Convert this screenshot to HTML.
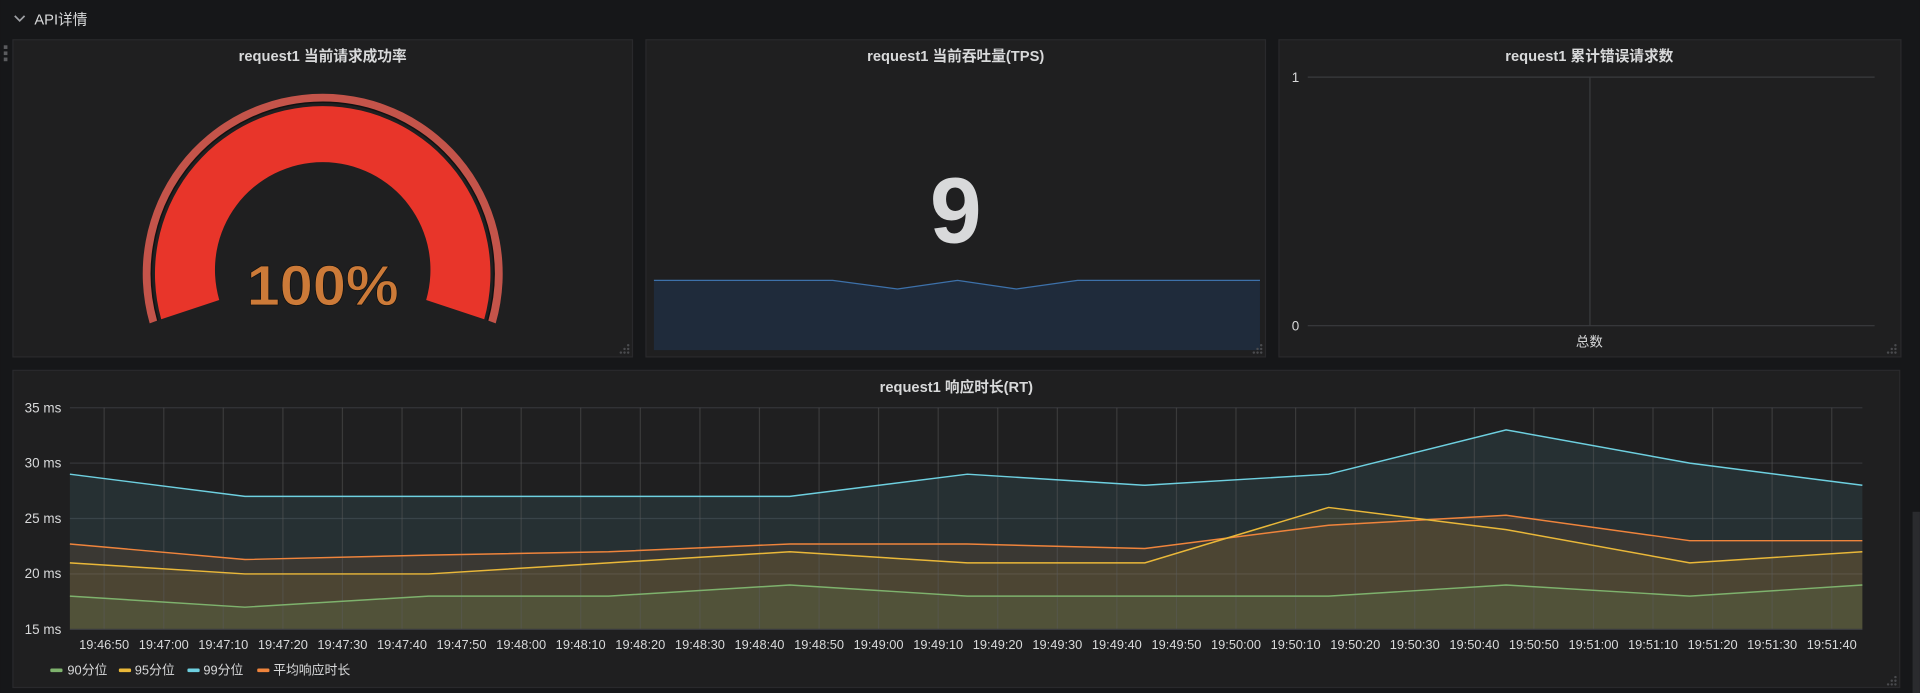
<!DOCTYPE html>
<html><head><meta charset="utf-8"><style>
html,body{margin:0;padding:0;background:#161719;width:1920px;height:693px;overflow:hidden}
svg{display:block}
text{font-family:"Liberation Sans","Noto Sans CJK SC",sans-serif}
</style></head><body>
<svg width="1920" height="693" viewBox="0 0 1568 566" xmlns="http://www.w3.org/2000/svg">
<rect width="1568" height="566" fill="#161719"/>
<path d="M12 13 l4 4 l4 -4" stroke="#9fa1a5" stroke-width="1.4" fill="none"/>
<text x="28" y="20" font-size="12" fill="#d8d9da">API详情</text>
<g fill="#5a5b5e"><rect x="3" y="37" width="3" height="3"/><rect x="3" y="42" width="3" height="3"/><rect x="3" y="47" width="3" height="3"/></g>

<!-- panel 1 -->
<rect x="10.5" y="32.5" width="506" height="259" fill="#1f1f20" stroke="#29292c"/>
<text x="263.5" y="50" font-size="12" font-weight="bold" fill="#d8d9da" text-anchor="middle">request1 当前请求成功率</text>
<path d="M122.2 264.1 A147 147 0 1 1 404.8 264.1 L398.2 261.7 A140 140 0 1 0 128.8 261.7 Z" fill="#c4544a"/>
<path d="M128.8 261.7 A140 140 0 1 1 398.2 261.7" fill="none" stroke="#111" stroke-width="1.2"/>
<path d="M131.6 260.7 A137 137 0 1 1 395.4 260.7 L348 245 A88 88 0 1 0 179 245 Z" fill="#e8352a"/>
<text x="263.5" y="249" font-size="46" font-weight="bold" fill="#cc7a38" stroke="#111" stroke-width="0.6" text-anchor="middle" textLength="124" lengthAdjust="spacingAndGlyphs">100%</text>
<g fill="#4a4b4e"><circle cx="513" cy="282" r="1"/><circle cx="513" cy="285" r="1"/><circle cx="510" cy="285" r="1"/><circle cx="513" cy="288" r="1"/><circle cx="510" cy="288" r="1"/><circle cx="507" cy="288" r="1"/></g>

<!-- panel 2 -->
<rect x="527.5" y="32.5" width="506" height="259" fill="#1f1f20" stroke="#29292c"/>
<text x="780.5" y="50" font-size="12" font-weight="bold" fill="#d8d9da" text-anchor="middle">request1 当前吞吐量(TPS)</text>
<text x="780.5" y="198" font-size="76" font-weight="bold" fill="#d8d9da" text-anchor="middle">9</text>
<path d="M534 229 L680 229 L733 236 L782 229 L830 236 L880 229 L1029 229 L1029 286 L534 286 Z" fill="#1f2b3b"/>
<path d="M534 229 L680 229 L733 236 L782 229 L830 236 L880 229 L1029 229" fill="none" stroke="#3d71aa" stroke-width="1"/>
<g fill="#4a4b4e"><circle cx="1030" cy="282" r="1"/><circle cx="1030" cy="285" r="1"/><circle cx="1027" cy="285" r="1"/><circle cx="1030" cy="288" r="1"/><circle cx="1027" cy="288" r="1"/><circle cx="1024" cy="288" r="1"/></g>

<!-- panel 3 -->
<rect x="1044.5" y="32.5" width="508" height="259" fill="#1f1f20" stroke="#29292c"/>
<text x="1298" y="50" font-size="12" font-weight="bold" fill="#d8d9da" text-anchor="middle">request1 累计错误请求数</text>
<line x1="1068" y1="63" x2="1531" y2="63" stroke="#3a3b3e"/>
<line x1="1068" y1="266" x2="1531" y2="266" stroke="#3a3b3e"/>
<line x1="1298.5" y1="63" x2="1298.5" y2="266" stroke="#3a3b3e"/>
<text x="1058" y="67" font-size="11" fill="#d8d9da" text-anchor="middle">1</text>
<text x="1058" y="270" font-size="11" fill="#d8d9da" text-anchor="middle">0</text>
<text x="1298" y="283" font-size="11" fill="#d8d9da" text-anchor="middle">总数</text>
<g fill="#4a4b4e"><circle cx="1548" cy="282" r="1"/><circle cx="1548" cy="285" r="1"/><circle cx="1545" cy="285" r="1"/><circle cx="1548" cy="288" r="1"/><circle cx="1545" cy="288" r="1"/><circle cx="1542" cy="288" r="1"/></g>

<!-- bottom panel -->
<rect x="10.5" y="302.5" width="1541" height="259" fill="#1f1f20" stroke="#29292c"/>
<rect x="1562" y="418" width="6" height="148" fill="#2a2b2e"/>
<text x="781" y="320" font-size="12" font-weight="bold" fill="#d8d9da" text-anchor="middle">request1 响应时长(RT)</text>
<g stroke="#343538" stroke-width="1">
<line x1="57" y1="333" x2="1521" y2="333"/><line x1="57" y1="378.25" x2="1521" y2="378.25"/><line x1="57" y1="423.5" x2="1521" y2="423.5"/><line x1="57" y1="468.75" x2="1521" y2="468.75"/>
</g>
<g font-size="11" fill="#d8d9da" text-anchor="end">
<text x="50" y="337">35 ms</text><text x="50" y="382">30 ms</text><text x="50" y="427">25 ms</text><text x="50" y="472">20 ms</text><text x="50" y="518">15 ms</text>
</g>
<path d="M57 387.3 L200 405.4 L350 405.4 L497 405.4 L645 405.4 L790 387.3 L935 396.35 L1085 387.3 L1230 351.1 L1380 378.25 L1521 396.35 L1521 514 L57 514Z" fill="#6ed0e0" fill-opacity="0.1"/>
<path d="M57 444.3 L200 457 L350 453.4 L497 450.65 L645 444.3 L790 444.3 L935 448 L1085 429 L1230 420.8 L1380 441.6 L1521 441.6 L1521 514 L57 514Z" fill="#ef843c" fill-opacity="0.1"/>
<path d="M57 459.7 L200 468.75 L350 468.75 L497 459.7 L645 450.65 L790 459.7 L935 459.7 L1085 414.45 L1230 432.55 L1380 459.7 L1521 450.65 L1521 514 L57 514Z" fill="#eab839" fill-opacity="0.1"/>
<path d="M57 486.85 L200 495.9 L350 486.85 L497 486.85 L645 477.8 L790 486.85 L935 486.85 L1085 486.85 L1230 477.8 L1380 486.85 L1521 477.8 L1521 514 L57 514Z" fill="#7eb26d" fill-opacity="0.12"/>
<g stroke="#5a5b5c" stroke-opacity="0.45">
<line x1="85" y1="333" x2="85" y2="514"/><line x1="133.7" y1="333" x2="133.7" y2="514"/><line x1="182.3" y1="333" x2="182.3" y2="514"/><line x1="231" y1="333" x2="231" y2="514"/><line x1="279.6" y1="333" x2="279.6" y2="514"/><line x1="328.3" y1="333" x2="328.3" y2="514"/><line x1="376.9" y1="333" x2="376.9" y2="514"/><line x1="425.6" y1="333" x2="425.6" y2="514"/><line x1="474.2" y1="333" x2="474.2" y2="514"/><line x1="522.9" y1="333" x2="522.9" y2="514"/><line x1="571.6" y1="333" x2="571.6" y2="514"/><line x1="620.2" y1="333" x2="620.2" y2="514"/><line x1="668.9" y1="333" x2="668.9" y2="514"/><line x1="717.5" y1="333" x2="717.5" y2="514"/><line x1="766.2" y1="333" x2="766.2" y2="514"/><line x1="814.8" y1="333" x2="814.8" y2="514"/><line x1="863.5" y1="333" x2="863.5" y2="514"/><line x1="912.1" y1="333" x2="912.1" y2="514"/><line x1="960.8" y1="333" x2="960.8" y2="514"/><line x1="1009.4" y1="333" x2="1009.4" y2="514"/><line x1="1058.1" y1="333" x2="1058.1" y2="514"/><line x1="1106.8" y1="333" x2="1106.8" y2="514"/><line x1="1155.4" y1="333" x2="1155.4" y2="514"/><line x1="1204.1" y1="333" x2="1204.1" y2="514"/><line x1="1252.7" y1="333" x2="1252.7" y2="514"/><line x1="1301.4" y1="333" x2="1301.4" y2="514"/><line x1="1350" y1="333" x2="1350" y2="514"/><line x1="1398.7" y1="333" x2="1398.7" y2="514"/><line x1="1447.3" y1="333" x2="1447.3" y2="514"/><line x1="1496" y1="333" x2="1496" y2="514"/>
</g>
<line x1="57" y1="514" x2="1521" y2="514" stroke="#3a3b3e"/>
<g fill="none" stroke-width="1.2">
<path d="M57 387.3 L200 405.4 L350 405.4 L497 405.4 L645 405.4 L790 387.3 L935 396.35 L1085 387.3 L1230 351.1 L1380 378.25 L1521 396.35" stroke="#6ed0e0"/>
<path d="M57 444.3 L200 457 L350 453.4 L497 450.65 L645 444.3 L790 444.3 L935 448 L1085 429 L1230 420.8 L1380 441.6 L1521 441.6" stroke="#ef843c"/>
<path d="M57 459.7 L200 468.75 L350 468.75 L497 459.7 L645 450.65 L790 459.7 L935 459.7 L1085 414.45 L1230 432.55 L1380 459.7 L1521 450.65" stroke="#eab839"/>
<path d="M57 486.85 L200 495.9 L350 486.85 L497 486.85 L645 477.8 L790 486.85 L935 486.85 L1085 486.85 L1230 477.8 L1380 486.85 L1521 477.8" stroke="#7eb26d"/>
</g>
<g font-size="10.5" fill="#d8d9da" text-anchor="middle">
<text x="85" y="530">19:46:50</text><text x="133.7" y="530">19:47:00</text><text x="182.3" y="530">19:47:10</text><text x="231" y="530">19:47:20</text><text x="279.6" y="530">19:47:30</text><text x="328.3" y="530">19:47:40</text><text x="376.9" y="530">19:47:50</text><text x="425.6" y="530">19:48:00</text><text x="474.2" y="530">19:48:10</text><text x="522.9" y="530">19:48:20</text><text x="571.6" y="530">19:48:30</text><text x="620.2" y="530">19:48:40</text><text x="668.9" y="530">19:48:50</text><text x="717.5" y="530">19:49:00</text><text x="766.2" y="530">19:49:10</text><text x="814.8" y="530">19:49:20</text><text x="863.5" y="530">19:49:30</text><text x="912.1" y="530">19:49:40</text><text x="960.8" y="530">19:49:50</text><text x="1009.4" y="530">19:50:00</text><text x="1058.1" y="530">19:50:10</text><text x="1106.8" y="530">19:50:20</text><text x="1155.4" y="530">19:50:30</text><text x="1204.1" y="530">19:50:40</text><text x="1252.7" y="530">19:50:50</text><text x="1301.4" y="530">19:51:00</text><text x="1350" y="530">19:51:10</text><text x="1398.7" y="530">19:51:20</text><text x="1447.3" y="530">19:51:30</text><text x="1496" y="530">19:51:40</text>
</g>
<g font-size="10.5" fill="#d8d9da">
<rect x="41" y="546" width="10" height="3" rx="1" fill="#7eb26d"/><text x="55" y="551">90分位</text>
<rect x="97" y="546" width="10" height="3" rx="1" fill="#eab839"/><text x="110" y="551">95分位</text>
<rect x="153" y="546" width="10" height="3" rx="1" fill="#6ed0e0"/><text x="166" y="551">99分位</text>
<rect x="210" y="546" width="10" height="3" rx="1" fill="#ef843c"/><text x="223" y="551">平均响应时长</text>
</g>
<g fill="#4a4b4e"><circle cx="1548" cy="553" r="1"/><circle cx="1548" cy="556" r="1"/><circle cx="1545" cy="556" r="1"/><circle cx="1548" cy="559" r="1"/><circle cx="1545" cy="559" r="1"/><circle cx="1542" cy="559" r="1"/></g>
</svg>
</body></html>
